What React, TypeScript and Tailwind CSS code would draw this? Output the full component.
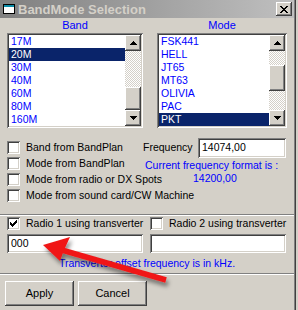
import React from "react";

const RAISED =
  "shadow-[inset_-1px_-1px_#404040,inset_1px_1px_#ffffff,inset_-2px_-2px_#808080,inset_2px_2px_#d4d0c8]";
const SUNKEN =
  "shadow-[inset_1px_1px_#808080,inset_-1px_-1px_#ffffff,inset_2px_2px_#404040,inset_-2px_-2px_#d4d0c8]";
const CHECKER =
  "[background-image:repeating-conic-gradient(#ffffff_0%_25%,#d4d0c8_0%_50%)] [background-size:2px_2px]";

function Check({ checked }: { checked?: boolean }) {
  return (
    <div className={`w-[13px] h-[13px] shrink-0 bg-white ${SUNKEN} flex items-center justify-center`}>
      {checked && (
        <svg width="7" height="7" viewBox="0 0 7 7" shapeRendering="crispEdges">
          <path d="M6 0h1v3h-1v1h-1v1h-1v1h-1v1h-1v-1h-1v-1h-1v-3h1v1h1v1h1v-1h1v-1h1z" fill="#000" />
        </svg>
      )}
    </div>
  );
}

function ArrowBtn({ up }: { up?: boolean }) {
  return (
    <div className={`w-[16px] h-[16px] bg-[#d4d0c8] ${RAISED} flex items-center justify-center shrink-0`}>
      <svg width="7" height="4" viewBox="0 0 7 4" shapeRendering="crispEdges">
        {up ? (
          <path d="M3 0h1v1h1v1h1v1h1v1h-7v-1h1v-1h1v-1h1z" fill="#000" />
        ) : (
          <path d="M0 0h7v1h-1v1h-1v1h-1v1h-1v-1h-1v-1h-1v-1h-1z" fill="#000" />
        )}
      </svg>
    </div>
  );
}

function ScrollBar({ t1, thumb, t2 }: { t1: number; thumb: number; t2: number }) {
  return (
    <div className="w-[16px] flex flex-col shrink-0">
      <ArrowBtn up />
      <div className={CHECKER} style={{ height: t1 }} />
      <div className={`bg-[#d4d0c8] ${RAISED}`} style={{ height: thumb }} />
      <div className={CHECKER} style={{ height: t2 }} />
      <ArrowBtn />
    </div>
  );
}

function ListBox({
  items,
  selected,
  width,
  t1,
  thumb,
  t2,
}: {
  items: string[];
  selected: number;
  width: string;
  t1: number;
  thumb: number;
  t2: number;
}) {
  return (
    <div className={`${width} h-[95px] bg-white ${SUNKEN} p-[2px] flex`}>
      <div className="flex-1 flex flex-col">
        {items.map((it, i) => (
          <div
            key={it}
            className={`h-[13px] leading-[13px] pl-[2px] ${
              i === selected ? "bg-[#0a246a] text-white" : "text-[#0000ff]"
            }`}
          >
            {it}
          </div>
        ))}
      </div>
      <ScrollBar t1={t1} thumb={thumb} t2={t2} />
    </div>
  );
}

function CheckRow({ label, checked }: { label: string; checked?: boolean }) {
  return (
    <div className="h-[16px] flex items-start gap-[6px] whitespace-nowrap">
      <Check checked={checked} />
      <span className="leading-[13px]">{label}</span>
    </div>
  );
}

function Button({ label }: { label: string }) {
  return (
    <div className={`w-[69px] h-[25px] bg-[#d4d0c8] ${RAISED} flex items-center justify-center text-black text-[11px]`}>
      {label}
    </div>
  );
}

export default function App() {
  return (
    <div className="relative w-[298px] h-[310px] overflow-hidden bg-[#d4d0c8] flex font-['Liberation_Sans',Arial,sans-serif] text-[10.5px] text-black">
      <div className="w-[294px] flex flex-col">
        {/* Title bar */}
        <div className="h-[18px] bg-linear-to-r from-[#808080] to-[#c0c0c0] flex items-center pl-[3px] pr-[2px]">
          <svg width="12" height="10" viewBox="0 0 12 10" shapeRendering="crispEdges">
            <rect x="0.5" y="0.5" width="11" height="9" fill="#fff" stroke="#000" />
            <rect x="1" y="1" width="10" height="2" fill="#0a8ca8" />
          </svg>
          <span className="ml-[3px] font-bold text-[13px] text-[#d4d0c8] leading-none">BandMode Selection</span>
          <div className={`ml-auto w-[16px] h-[14px] bg-[#d4d0c8] ${RAISED} flex items-center justify-center`}>
            <svg width="8" height="7" viewBox="0 0 8 7" shapeRendering="crispEdges">
              <path
                d="M0 0h2v1h1v1h2v-1h1v-1h2v1h-1v1h-1v1h-1v1h1v1h1v1h1v1h-2v-1h-1v-1h-2v1h-1v1h-2v-1h1v-1h1v-1h1v-1h-1v-1h-1v-1h-1z"
                fill="#000"
              />
            </svg>
          </div>
        </div>

        {/* Lists */}
        <div className="flex pl-[7px] gap-[14px]">
          <div className="w-[136px] flex flex-col">
            <div className="h-[15px] leading-[15px] text-center text-[#0000ff] text-[11px]">Band</div>
            <ListBox
              items={["17M", "20M", "30M", "40M", "60M", "80M", "160M"]}
              selected={1}
              width="w-[136px]"
              t1={36}
              thumb={23}
              t2={0}
            />
          </div>
          <div className="w-[130px] flex flex-col">
            <div className="h-[15px] leading-[15px] text-center text-[#0000ff] text-[11px]">Mode</div>
            <ListBox
              items={["FSK441", "HELL", "JT65", "MT63", "OLIVIA", "PAC", "PKT"]}
              selected={6}
              width="w-[130px]"
              t1={14}
              thumb={26}
              t2={19}
            />
          </div>
        </div>

        {/* Options */}
        <div className="grid pl-[7px] mt-[10px]">
          <div className="col-start-1 row-start-1 flex flex-col pt-[3px]">
            <CheckRow label="Band from BandPlan" />
            <CheckRow label="Mode from BandPlan" />
            <CheckRow label="Mode from radio or DX Spots" />
            <CheckRow label="Mode from sound card/CW Machine" />
          </div>
          <div className="col-start-1 row-start-1 ml-[136px] w-[143px] flex flex-col">
            <div className="h-[20px] flex items-center justify-between">
              <span>Frequency</span>
              <div className={`w-[88px] h-[20px] bg-white ${SUNKEN} flex items-center pl-[4px]`}>14074,00</div>
            </div>
            <div className="h-[13px] leading-[13px] mt-[1px] pl-[2px] text-[#0000ff] whitespace-nowrap">
              Current frequency format is :
            </div>
            <div className="h-[13px] leading-[13px] pl-[50px] text-[#0000ff]">14200,00</div>
          </div>
        </div>

        <div className="mt-[9px] h-[2px] border-t border-t-[#808080] border-b border-b-white" />

        {/* Transverter */}
        <div className="flex pl-[7px] gap-[7px] mt-[1px]">
          <div className="w-[136px] flex flex-col gap-[4px]">
            <div className="h-[13px] flex items-start gap-[6px] whitespace-nowrap">
              <Check checked />
              <span className="leading-[13px]">Radio 1 using transverter</span>
            </div>
            <div className={`h-[19px] bg-white ${SUNKEN} flex items-center pl-[4px]`}>000</div>
          </div>
          <div className="w-[136px] flex flex-col gap-[4px]">
            <div className="h-[13px] flex items-start gap-[6px] whitespace-nowrap">
              <Check />
              <span className="leading-[13px]">Radio 2 using transverter</span>
            </div>
            <div className={`h-[19px] bg-white ${SUNKEN}`} />
          </div>
        </div>

        <div className="mt-[4px] h-[13px] leading-[13px] text-center text-[#0000ff]">
          Transverter offset frequency is in kHz.
        </div>

        <div className="mt-[3px] h-[2px] border-t border-t-[#808080] border-b border-b-white" />

        <div className="flex pl-[5px] gap-[4px] mt-[6px]">
          <Button label="Apply" />
          <Button label="Cancel" />
        </div>
      </div>
      <div className="w-[1px] bg-[#808080]" />
      <div className="w-[1px] bg-[#404040]" />
      <div className="flex-1 bg-[#d4d0c8]" />

      {/* Red annotation arrow */}
      <svg className="absolute inset-0 pointer-events-none" width="298" height="310" viewBox="0 0 298 310">
        <defs>
          <filter id="sh" x="-20%" y="-50%" width="140%" height="200%">
            <feDropShadow dx="2" dy="4" stdDeviation="2" floodColor="#000" floodOpacity="0.45" />
          </filter>
        </defs>
        <g filter="url(#sh)" fill="#f01818">
          <line x1="166" y1="280" x2="60" y2="249.5" stroke="#f01818" strokeWidth="5.5" strokeLinecap="butt" />
          <polygon points="43,245 70,237 64,250 60,261" />
        </g>
      </svg>
    </div>
  );
}
